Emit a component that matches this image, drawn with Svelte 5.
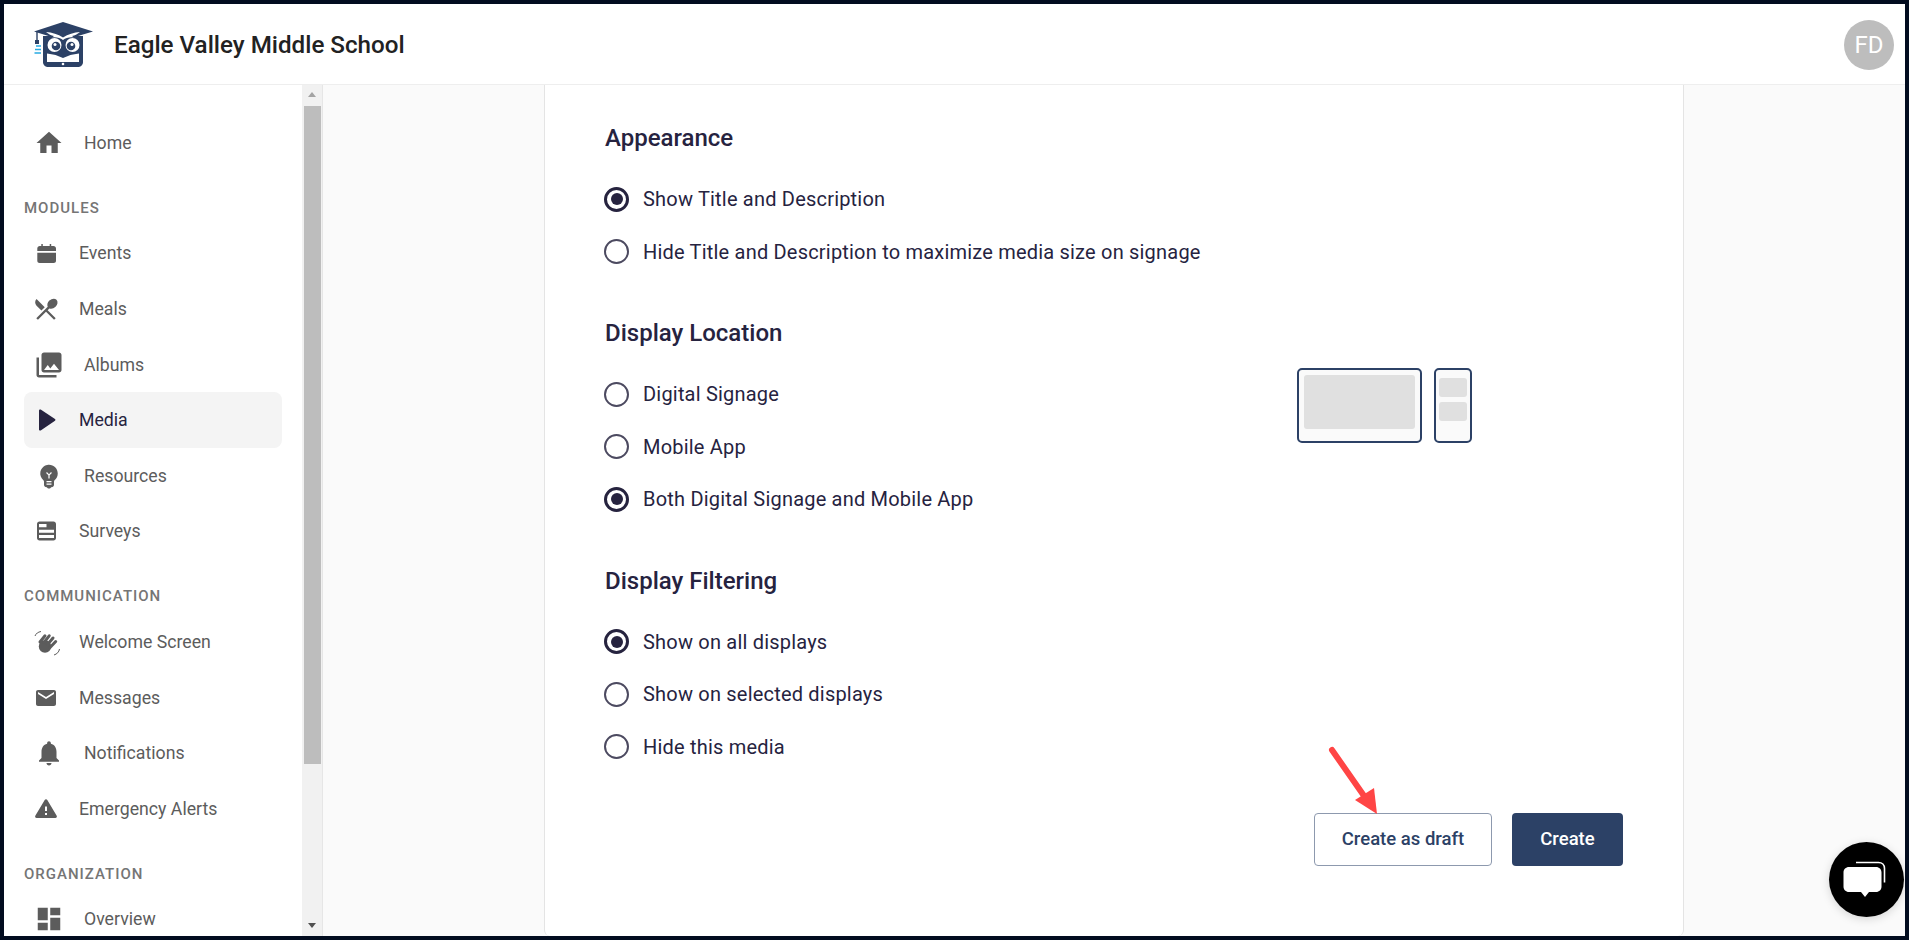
<script>
	const icons = {
		home: 'M10 20v-6h4v6h5v-8h3L12 3 2 12h3v8z',
		events: 'M7.300 3h1.500v2h6.900V3h1.500v2h2.300c1.400 0 2.500 1.100 2.500 2.500V10H3.300V7.500C3.300 6.100 4.400 5 5.800 5h1.500zM3.300 11.700H22v8c0 1.300-1 2.300-2.300 2.300H5.600c-1.300 0-2.300-1-2.300-2.300z',
		meals: 'M8.100 13.340l2.830-2.830L3.910 3.500c-1.560 1.560-1.560 4.090 0 5.660l4.190 4.180zm6.780-1.810c1.530.71 3.680.21 5.270-1.380 1.910-1.910 2.280-4.650.81-6.120-1.460-1.460-4.200-1.100-6.120.81-1.590 1.590-2.090 3.740-1.380 5.270L3.700 19.870l1.410 1.410L12 14.410l6.880 6.880 1.410-1.410L13.410 13l1.470-1.470z',
		albums: 'M22 16V4c0-1.100-.9-2-2-2H8c-1.100 0-2 .9-2 2v12c0 1.100.9 2 2 2h12c1.100 0 2-.9 2-2zm-11-4l2.030 2.710L16 11l4 5H8l3-4zM2 6v14c0 1.100.9 2 2 2h14v-2H4V6H2z',
		media: 'M5 2.500c0-.9 1-1.400 1.700-.9l14.300 9.500c.6.4.6 1.300 0 1.700L6.700 22.400c-.7.5-1.700 0-1.700-.9z',
		resources: 'M12 3c-.46 0-.93.04-1.400.14-2.760.53-4.960 2.760-5.480 5.520-.48 2.610.48 5.010 2.220 6.560.43.38.66.91.66 1.470V19c0 1.100.9 2 2 2h.28c.35.6.98 1 1.720 1s1.380-.4 1.720-1H14c1.100 0 2-.9 2-2v-2.310c0-.55.22-1.090.64-1.460C18.090 13.950 19 12.080 19 10c0-3.870-3.130-7-7-7zm.5 11h-1v-2.590L9.670 9.590l.71-.71L12 10.500l1.620-1.620.71.71-1.830 1.830V14zm1.500 5c-.01 0-.02-.01-.03 0H10v-1h4v1zm0-2h-4v-1h4v1z',
		surveys: 'M5.500 2.500h14c1.400 0 2.500 1.100 2.500 2.500v14c0 1.400-1.100 2.500-2.500 2.500h-14C4.100 21.500 3 20.400 3 19V5c0-1.400 1.100-2.500 2.500-2.500zM5 5v3.200h7.500V5zm0 5.700v3h15v-3zm0 5.400v3h15v-3z',
		messages: 'M20 4H4c-1.100 0-1.990.9-1.990 2L2 18c0 1.100.9 2 2 2h16c1.100 0 2-.9 2-2V6c0-1.100-.9-2-2-2zm0 4l-8 5-8-5V6l8 5 8-5v2z',
		notifications: 'M12 22c1.100 0 2-.9 2-2h-4c0 1.100.89 2 2 2zm6-6v-5c0-3.070-1.640-5.640-4.500-6.320V4c0-.83-.67-1.500-1.500-1.500s-1.500.67-1.500 1.500v.68C7.630 5.360 6 7.920 6 11v5l-2 2v1h16v-1l-2-2z',
		alerts: 'M2.600 21h18.800c1.200 0 1.900-1.300 1.300-2.300L13.300 2.900c-.6-1-2-1-2.600 0L1.300 18.700c-.6 1 .1 2.300 1.300 2.300zM13 18h-2v-2h2zm0-4h-2v-4.500h2z',
		overview: 'M3 13h8V3H3v10zm0 8h8v-6H3v6zm10 0h8V11h-8v10zm0-18v6h8V3h-8z'
	};

	const sections = [
		{
			items: [{ label: 'Home', icon: 'home', big: true }]
		},
		{
			title: 'MODULES',
			items: [
				{ label: 'Events', icon: 'events' },
				{ label: 'Meals', icon: 'meals' },
				{ label: 'Albums', icon: 'albums', big: true },
				{ label: 'Media', icon: 'media', active: true },
				{ label: 'Resources', icon: 'resources', big: true },
				{ label: 'Surveys', icon: 'surveys' }
			]
		},
		{
			title: 'COMMUNICATION',
			items: [
				{ label: 'Welcome Screen', icon: 'welcome' },
				{ label: 'Messages', icon: 'messages' },
				{ label: 'Notifications', icon: 'notifications', big: true },
				{ label: 'Emergency Alerts', icon: 'alerts' }
			]
		},
		{
			title: 'ORGANIZATION',
			items: [{ label: 'Overview', icon: 'overview', big: true }]
		}
	];

	const appearance = [
		{ label: 'Show Title and Description', checked: true },
		{ label: 'Hide Title and Description to maximize media size on signage' }
	];
	const location = [
		{ label: 'Digital Signage' },
		{ label: 'Mobile App' },
		{ label: 'Both Digital Signage and Mobile App', checked: true }
	];
	const filtering = [
		{ label: 'Show on all displays', checked: true },
		{ label: 'Show on selected displays' },
		{ label: 'Hide this media' }
	];
</script>

{#snippet options(list)}
	<div class="options">
		{#each list as opt}
			<div class="option">
				<span class="radio" class:checked={opt.checked}></span>
				<span>{opt.label}</span>
			</div>
		{/each}
	</div>
{/snippet}

<div class="shell">
	<header class="topbar">
		<svg class="logo" viewBox="33 22 61 46" aria-hidden="true">
			<path fill="#2c4166" d="M43 36h40v26c0 2.800-2 5-5 5H48c-3 0-5-2.200-5-5z" />
			<path fill="#2c4166" d="M34 31.500 63 22l30 9.500-30 9z" />
			<path fill="none" stroke="#2c4166" stroke-width="1.400" d="M37 32v9" />
			<rect x="35" y="40" width="4" height="4" fill="#2c4166" />
			<path stroke="#29abe2" stroke-width="1.500" d="M36 46h5M35 49.500h6M34.500 53h6.500" />
			<path fill="#fff" d="M46 32c6 .5 12 2 17 5.500 5-3.500 11-5 17-5.500-3 2.500-5 3.500-8 4 1 .5 1 1 2 1.500-5-.5-8 .5-11 2.500-3-2-6-3-11-2.500 1-.5 1-1 2-1.500-3-.5-5-1.500-8-4z" />
			<circle cx="54.500" cy="45" r="7" fill="#fff" />
			<circle cx="72.500" cy="45" r="7" fill="#fff" />
			<circle cx="56" cy="46" r="4.300" fill="#2c4166" />
			<circle cx="71" cy="46" r="4.300" fill="#2c4166" />
			<circle cx="55" cy="44.500" r="1.500" fill="#fff" />
			<circle cx="72" cy="44.500" r="1.500" fill="#fff" />
			<path fill="#fff" d="M47 53.500c4 1 8 1 11 2.500l5 2 5-2c3-1.500 7-1.500 11-2.500V62H47z" />
			<path fill="#2c4166" d="M60 49h6l-3 7z" />
			<circle cx="63" cy="64" r="1.300" fill="#fff" />
		</svg>
		<h1>Eagle Valley Middle School</h1>
		<div class="avatar">FD</div>
	</header>

	<div class="body">
		<aside class="sidebar">
			<nav>
				{#each sections as section}
					<div class="nav-section">
						{#if section.title}
							<div class="nav-title">{section.title}</div>
						{/if}
						{#each section.items as item}
							<div class="nav-item icon-{item.icon}" class:active={item.active} class:big={item.big}>
								{#if item.icon === 'welcome'}
									<svg viewBox="0 0 24 24" aria-hidden="true">
										<circle cx="11" cy="16.500" r="6.200" />
										<g fill="none" stroke="currentColor" stroke-width="3" stroke-linecap="round">
											<path d="M6 12 11 5.800" />
											<path d="M10 12.500 15.200 5.800" />
											<path d="M13.500 14.500 19 8" />
											<path d="M16 17.500 21.700 11.500" />
										</g>
										<path fill="none" stroke="currentColor" stroke-width="1" d="M1 6c1-2.500 3-4 6-4.500M25.500 19c-.5 3-2.500 5-5.500 6" />
									</svg>
								{:else}
									<svg viewBox="0 0 24 24" aria-hidden="true"><path d={icons[item.icon]} /></svg>
								{/if}
								<span>{item.label}</span>
							</div>
						{/each}
					</div>
				{/each}
			</nav>
			<div class="scrollbar">
				<span class="arrow up"></span>
				<div class="track"><div class="thumb"></div></div>
				<span class="arrow down"></span>
			</div>
		</aside>

		<main class="content">
			<div class="card">
				<section>
					<h2>Appearance</h2>
					{@render options(appearance)}
				</section>
				<section>
					<h2>Display Location</h2>
					<div class="location-row">
						{@render options(location)}
						<div class="preview">
							<div class="screen wide"><div class="block"></div></div>
							<div class="screen phone">
								<div class="block"></div>
								<div class="block"></div>
							</div>
						</div>
					</div>
				</section>
				<section>
					<h2>Display Filtering</h2>
					{@render options(filtering)}
				</section>
				<div class="actions">
					<button class="btn outline">Create as draft</button>
					<button class="btn solid">Create</button>
				</div>
			</div>
		</main>
	</div>

	<!-- annotation drawn on top of the screenshot -->
	<svg class="annotation" viewBox="0 0 60 76" aria-hidden="true">
		<path d="M5 5 42 58" fill="none" stroke="#ff4545" stroke-width="6" stroke-linecap="round" />
		<path d="M50 69 28 55 47 43z" fill="#ff4545" />
	</svg>

	<div class="chat">
		<svg viewBox="0 0 75 75" aria-hidden="true">
			<path d="M27 20.500h22.500c3.500 0 6 2.500 6 6v14" fill="none" stroke="#fff" stroke-width="1.600" />
			<path d="M25 25h22c3.200 0 5.500 2.300 5.500 5.500v14c0 3.200-2.300 5.500-5.500 5.500h-7l-4 5-4-5h-12c-3.200 0-5.500-2.300-5.500-5.500v-14c0-3.200 2.300-5.500 5.500-5.500z" fill="#fff" />
		</svg>
	</div>
</div>

<style>
	:global(body) {
		margin: 0;
		background: #020c1f;
	}

	.shell {
		position: relative;
		box-sizing: border-box;
		height: 940px;
		border: 4px solid #020c1f;
		display: flex;
		flex-direction: column;
		font-family: Roboto, sans-serif;
		overflow: hidden;
		background: #fff;
	}

	.topbar {
		flex: none;
		box-sizing: border-box;
		height: 81px;
		display: flex;
		align-items: center;
		padding: 2px 11px 0 29px;
		border-bottom: 1px solid #eeeeee;
	}

	.logo {
		width: 61px;
		height: 46px;
	}

	h1 {
		margin: 0 0 0 20px;
		font-size: 24.200px;
		font-weight: 500;
		color: #222;
		flex: 1;
	}

	.avatar {
		width: 50px;
		height: 50px;
		border-radius: 50%;
		background: #bdbdbd;
		color: #fff;
		font-size: 24px;
		display: flex;
		align-items: center;
		justify-content: center;
	}

	.body {
		flex: 1;
		min-height: 0;
		display: flex;
	}

	.sidebar {
		flex: none;
		width: 318px;
		display: flex;
		border-right: 1px solid #e6e6e6;
		overflow: hidden;
	}

	nav {
		flex: 1;
		padding: 30px 20px 0 20px;
		min-width: 0;
	}

	.nav-title {
		margin: 28px 0 9px;
		height: 18px;
		line-height: 18px;
		font-size: 15px;
		font-weight: 500;
		letter-spacing: 1px;
		color: #757575;
	}

	.nav-item {
		display: flex;
		align-items: center;
		gap: 21px;
		height: 55.600px;
		padding-left: 10px;
		border-radius: 8px;
		font-size: 17.700px;
		font-weight: 450;
		color: #5c5c5c;
	}

	.nav-item svg {
		flex: none;
		width: 24px;
		height: 24px;
		fill: currentColor;
		overflow: visible;
	}

	.nav-item.big {
		gap: 20px;
	}

	.nav-item.big svg {
		width: 30px;
		height: 30px;
	}

	.icon-meals svg {
		transform: scale(1.170);
	}

	.nav-item.active {
		background: #f4f4f4;
		color: #26233f;
	}

	.scrollbar {
		flex: none;
		width: 20px;
		background: #f1f1f1;
		display: flex;
		flex-direction: column;
		align-items: center;
	}

	.arrow {
		flex: none;
		height: 21px;
		width: 17px;
		position: relative;
	}

	.arrow::after {
		content: '';
		position: absolute;
		left: 4px;
		border-left: 4.500px solid transparent;
		border-right: 4.500px solid transparent;
	}

	.arrow.up::after {
		top: 7px;
		border-bottom: 5px solid #a3a3a3;
	}

	.arrow.down::after {
		top: 8px;
		border-top: 5px solid #505050;
	}

	.track {
		flex: 1;
		width: 17px;
	}

	.thumb {
		height: 658px;
		background: #bdbdbd;
	}

	.content {
		flex: 1;
		min-width: 0;
		background: #fafafa;
		display: flex;
		justify-content: center;
	}

	.card {
		box-sizing: border-box;
		width: 1140px;
		padding: 38px 60px 0 59px;
		background: #fff;
		border: solid #e4e4e4;
		border-width: 0 1px;
		border-radius: 0 0 6px 6px;
		color: #26233f;
	}

	section + section {
		margin-top: 40px;
	}

	h2 {
		margin: 0 0 20px 1px;
		height: 30px;
		line-height: 30px;
		font-size: 24px;
		font-weight: 500;
	}

	.option {
		display: flex;
		align-items: center;
		gap: 14px;
		height: 52.500px;
		font-size: 20px;
		letter-spacing: 0.200px;
	}

	.radio {
		flex: none;
		box-sizing: border-box;
		width: 25px;
		height: 25px;
		border: 2.500px solid #4c4a60;
		border-radius: 50%;
		display: flex;
		align-items: center;
		justify-content: center;
	}

	.radio.checked {
		border: 3px solid #26233f;
	}

	.radio.checked::after {
		content: '';
		width: 12px;
		height: 12px;
		border-radius: 50%;
		background: #26233f;
	}

	.location-row {
		display: flex;
		align-items: flex-start;
	}

	.location-row .options {
		width: 693px;
	}

	.preview {
		display: flex;
		gap: 12px;
	}

	.screen {
		box-sizing: border-box;
		height: 75px;
		border: 2.500px solid #2c4166;
		border-radius: 5px;
		background: #fafafa;
	}

	.screen.wide {
		width: 125px;
		padding: 5px;
	}

	.screen.wide .block {
		height: 54px;
	}

	.screen.phone {
		width: 38px;
		padding: 8px 3px;
		display: flex;
		flex-direction: column;
		gap: 5px;
	}

	.screen.phone .block {
		height: 19px;
	}

	.block {
		background: #e0e0e0;
		border-radius: 3px;
	}

	.actions {
		margin-top: 40px;
		display: flex;
		justify-content: flex-end;
		gap: 20px;
	}

	.btn {
		box-sizing: border-box;
		height: 53px;
		padding-bottom: 3px;
		font-family: inherit;
		font-size: 18.500px;
		font-weight: 500;
		border-radius: 4px;
	}

	.outline {
		width: 178px;
		background: #fff;
		color: #2c4166;
		border: 1px solid #8d99ae;
	}

	.solid {
		width: 111px;
		background: #2c4166;
		color: #fff;
		border: none;
	}

	.annotation {
		position: absolute;
		left: 1323px;
		top: 741px;
		width: 60px;
		height: 76px;
	}

	.chat {
		position: absolute;
		left: 1825px;
		top: 838px;
		width: 75px;
		height: 75px;
		border-radius: 50%;
		background: #000;
		box-shadow: 0 2px 10px rgba(0, 0, 0, 0.15);
	}

	.chat svg {
		display: block;
		width: 75px;
		height: 75px;
	}
</style>
